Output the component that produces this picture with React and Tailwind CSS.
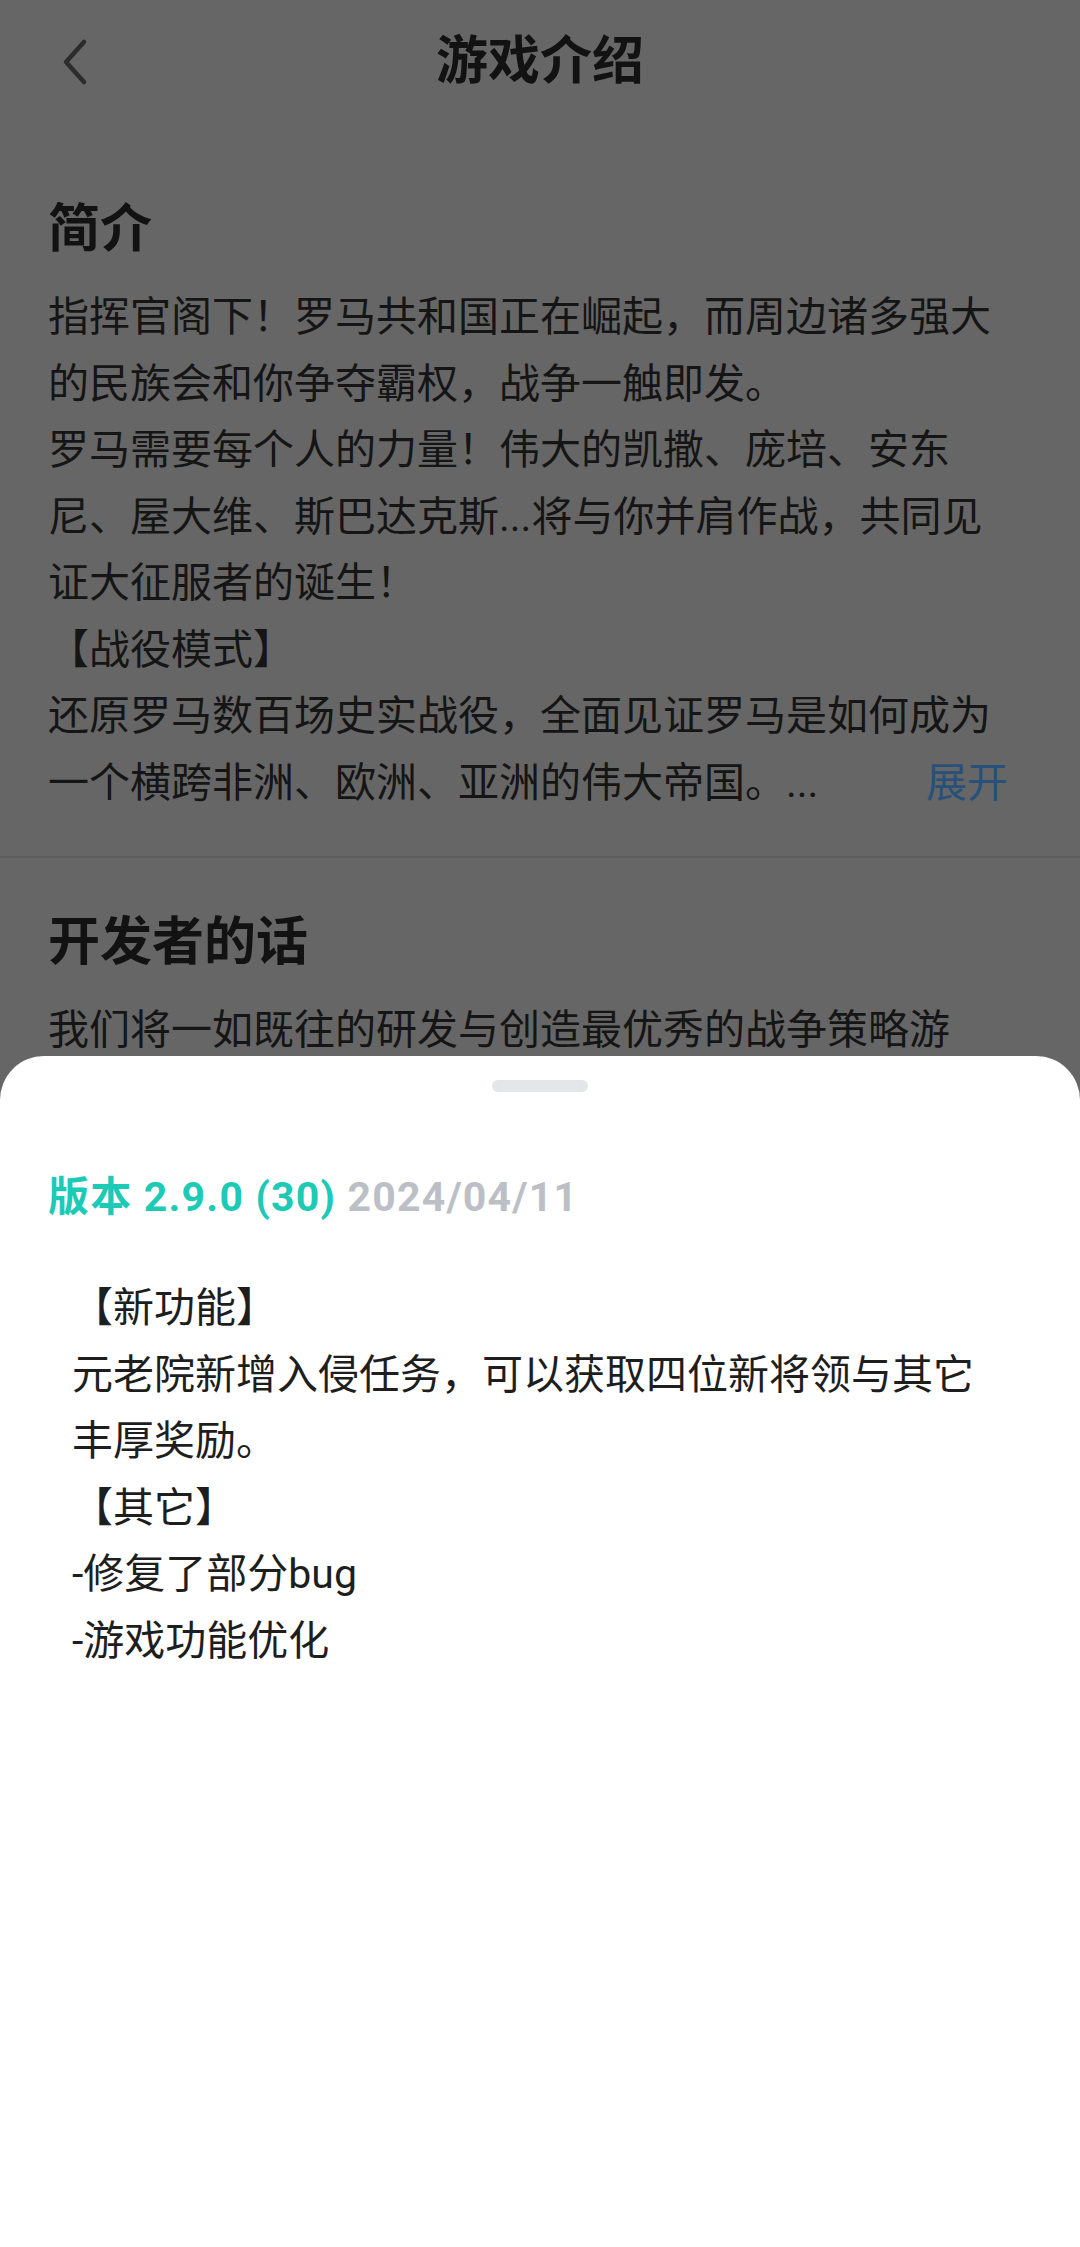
const intro = [
  '指挥官阁下！罗马共和国正在崛起，而周边诸多强大',
  '的民族会和你争夺霸权，战争一触即发。',
  '罗马需要每个人的力量！伟大的凯撒、庞培、安东',
  '尼、屋大维、斯巴达克斯...将与你并肩作战，共同见',
  '证大征服者的诞生！',
  '【战役模式】',
  '还原罗马数百场史实战役，全面见证罗马是如何成为',
]

const devWords = [
  '我们将一如既往的研发与创造最优秀的战争策略游',
  '戏，感谢各位指挥官一直以来的支持与陪伴！',
]

const changelog = [
  '【新功能】',
  '元老院新增入侵任务，可以获取四位新将领与其它',
  '丰厚奖励。',
  '【其它】',
  '-修复了部分bug',
  '-游戏功能优化',
]

function Lines({ lines }) {
  return lines.map(l => (
    <div key={l} className="whitespace-nowrap">{l}</div>
  ))
}

export default function App() {
  return (
    <div className="relative h-[2247px] w-[1080px] overflow-hidden bg-[#666666] font-['Roboto','Noto_Sans_CJK_SC',sans-serif] text-[#151515]">
      <header className="grid h-[124px] grid-cols-[1fr_auto_1fr] items-center px-[60px]">
        <button className="flex h-[48px] w-[28px] items-center justify-center">
          <svg width="28" height="48" viewBox="0 0 28 48" fill="none">
            <polyline points="24,4 6,24 24,44" stroke="#2c2c2c" strokeWidth="4.5" strokeLinecap="round" strokeLinejoin="round" />
          </svg>
        </button>
        <h1 className="text-[52px] font-bold leading-[72px] text-[#121212]">游戏介绍</h1>
        <div />
      </header>

      <section className="px-12 pb-[40px] pt-[70px]">
        <h2 className="text-[52px] font-bold leading-[72px] text-[#121212]">简介</h2>
        <div className="mt-[18px] text-[41px] leading-[66.5px]">
          <Lines lines={intro} />
          <div className="flex items-center justify-between pr-6">
            <span className="whitespace-nowrap">一个横跨非洲、欧洲、亚洲的伟大帝国。...</span>
            <button className="text-[#27507a]">展开</button>
          </div>
        </div>
      </section>

      <div className="h-[2px] bg-[#5d5d5d]" />

      <section className="px-12 pt-[49px]">
        <h2 className="text-[52px] font-bold leading-[72px] text-[#121212]">开发者的话</h2>
        <div className="mt-[18px] text-[41px] leading-[66.5px]">
          <Lines lines={devWords} />
        </div>
      </section>

      <div className="absolute inset-x-0 bottom-0 h-[1191px] rounded-t-[44px] bg-white">
        <div className="mx-auto mt-[24px] h-[12px] w-[96px] rounded-full bg-[#e4e6ea]" />
        <div className="mt-[77px] px-12 text-[41px] font-bold leading-[56px] tracking-[1.2px]">
          <span className="text-[#1ccab6]">版本 2.9.0 (30)</span>{' '}
          <span className="text-[#bcc0c6]">2024/04/11</span>
        </div>
        <div className="mt-[50px] pl-[72px] text-[41px] leading-[66.5px] text-[#1e1e1e]">
          <Lines lines={changelog} />
        </div>
      </div>
    </div>
  )
}
